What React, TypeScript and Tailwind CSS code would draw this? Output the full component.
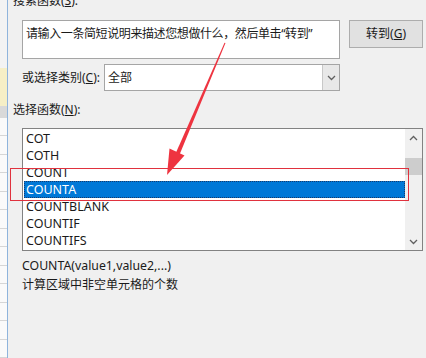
import React from 'react';

const FONT = { fontFamily: '"Noto Sans", "Noto Sans CJK SC", sans-serif' };

const functions = ['COT', 'COTH', 'COUNT', 'COUNTA', 'COUNTBLANK', 'COUNTIF', 'COUNTIFS'];

const Chevron: React.FC<{ up?: boolean }> = ({ up }) => (
  <svg width="9" height="6" viewBox="0 0 9 6" className="block">
    <polyline
      points={up ? '1,5 4.5,1.5 8,5' : '1,1 4.5,4.5 8,1'}
      fill="none"
      stroke="#606060"
      strokeWidth="1.3"
    />
  </svg>
);

const SheetStrip: React.FC = () => (
  <div className="w-[8px] shrink-0 flex flex-col bg-[#fafafa] border-r border-[#8fb4dc]">
    <div className="h-[68px] bg-[#f3f3f3]" />
    <div className="h-[38px] bg-[#f6efc6]" />
    <div className="h-[12px] bg-[#d9d9d9]" />
    {Array.from({ length: 13 }).map((_, i) => (
      <div key={i} className="h-[18.5px] shrink-0 border-b border-[#d6d6d6]" />
    ))}
  </div>
);

const App: React.FC = () => {
  return (
    <div
      className="relative w-[426px] h-[358px] overflow-hidden bg-[#f0f0f0] flex text-[12px] text-[#1a1a1a]"
      style={FONT}
    >
      <SheetStrip />

      <div className="flex-1 flex flex-col">
        {/* search */}
        <div className="pl-[5px] mt-[-7px] leading-[16px]">
          搜索函数(<span className="underline">S</span>):
        </div>
        <div className="flex items-start pl-[14px] mt-[11px] gap-[9px]">
          <div className="w-[318px] h-[39px] bg-white border border-[#a5a5a5] px-[3px] pt-[5px] leading-[16px] whitespace-nowrap tracking-[-0.4px]">
            请输入一条简短说明来描述您想做什么，然后单击“转到”
          </div>
          <button className="w-[74px] h-[28px] bg-[#e1e1e1] border border-[#adadad] leading-[16px]">
            转到(<span className="underline">G</span>)
          </button>
        </div>

        {/* category */}
        <div className="flex items-center pl-[14px] mt-[5px]">
          <div className="w-[82px] leading-[16px]">
            或选择类别(<span className="underline">C</span>):
          </div>
          <div className="w-[236px] h-[27px] bg-white border border-[#a5a5a5] flex items-center">
            <div className="flex-1 pl-[3px] leading-[16px]">全部</div>
            <div className="w-[17px] h-full bg-[#e8e8e8] border-l border-[#c8c8c8] flex items-center justify-center">
              <Chevron />
            </div>
          </div>
        </div>

        {/* function list */}
        <div className="pl-[5px] mt-[11px] leading-[16px]">
          选择函数(<span className="underline">N</span>):
        </div>
        <div className="ml-[14px] mt-[10px] w-[401px] h-[123px] bg-white border border-[#828282] flex">
          <div className="flex-1 pt-[1px] pl-[1px] text-[12.5px]">
            {functions.map((f) => (
              <div
                key={f}
                className={`h-[17px] leading-[17px] pl-[2px] ${
                  f === 'COUNTA'
                    ? 'bg-[#0078d7] text-white outline-1 outline-dotted outline-[#1a3a6a] -outline-offset-1'
                    : ''
                }`}
              >
                {f}
              </div>
            ))}
          </div>
          <div className="w-[17px] bg-[#f0f0f0] flex flex-col items-center">
            <div className="h-[17px] flex items-center justify-center">
              <Chevron up />
            </div>
            <div className="w-[17px] h-[17px] mt-[12px] bg-[#cdcdcd]" />
            <div className="flex-1" />
            <div className="h-[17px] flex items-center justify-center">
              <Chevron />
            </div>
          </div>
        </div>

        {/* description */}
        <div className="pl-[14px] mt-[5px] leading-[19px]">
          <div className="text-[12.3px]">COUNTA(value1,value2,...)</div>
          <div>计算区域中非空单元格的个数</div>
        </div>
      </div>

      {/* annotation: red box and arrow */}
      <div className="absolute left-[10px] top-[168px] w-[399px] h-[33px] border border-[#e0323e]" />
      <svg className="absolute left-0 top-0" width="426" height="358" viewBox="0 0 426 358">
        <polygon points="225.5,43 224.5,42.7 175.6,153.5 179.4,155" fill="#ee3440" />
        <polygon points="167,175 169.5,148.5 184.5,155.5" fill="#ee3440" />
      </svg>
    </div>
  );
};

export default App;
